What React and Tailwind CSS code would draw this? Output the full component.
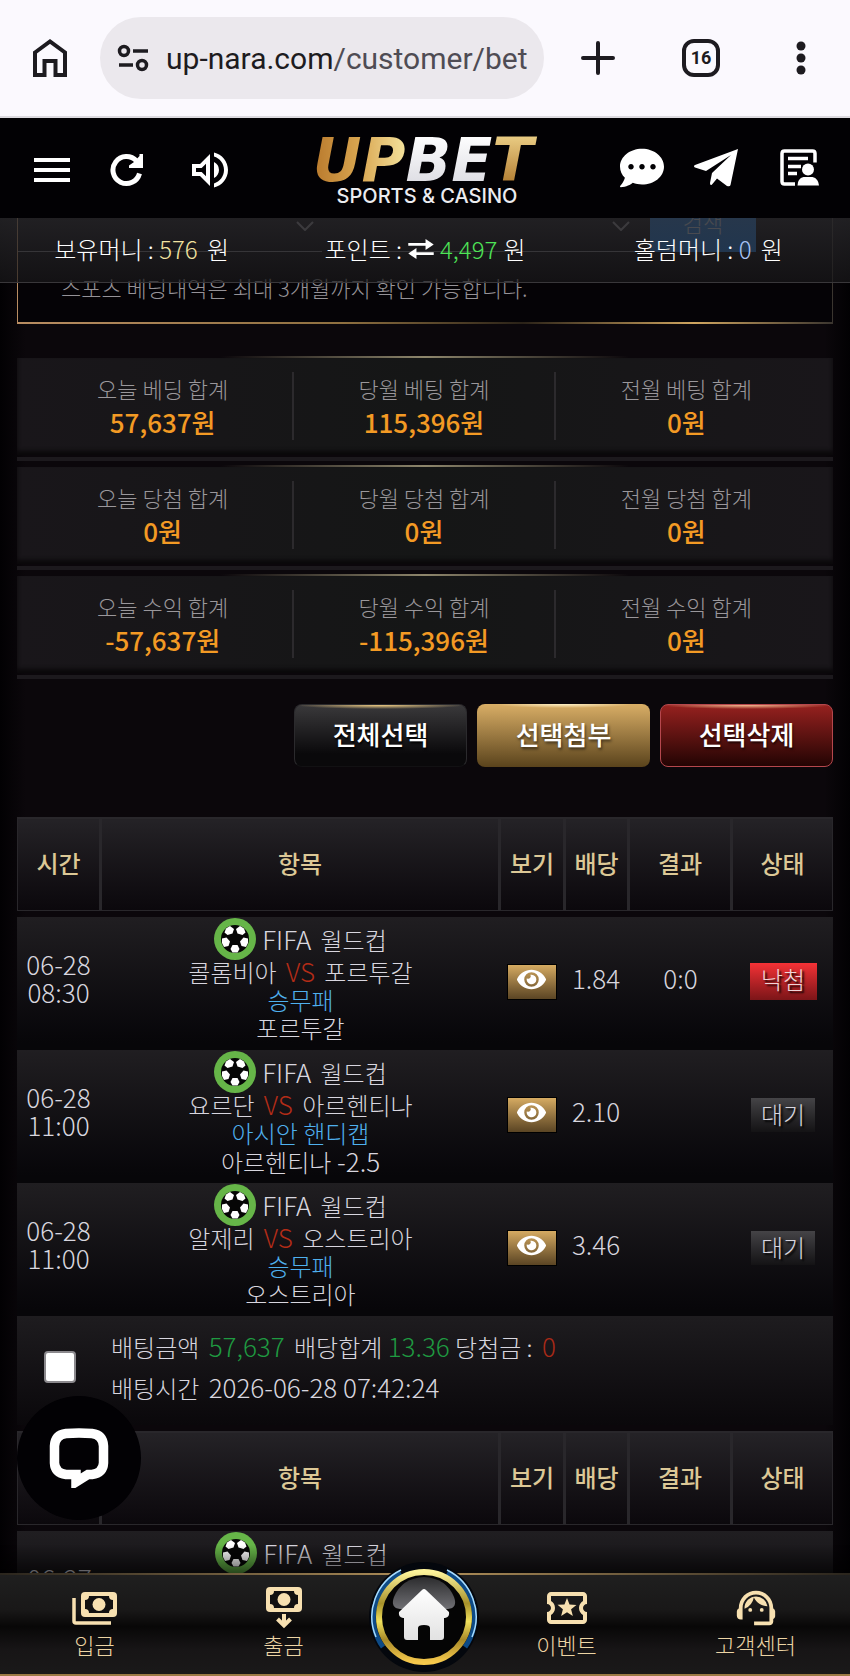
import React, { useState } from 'react'
import { MdMenu, MdOutlineVolumeUp, MdOutlineLocalActivity, MdSupportAgent } from 'react-icons/md'
import { FaCommentDots, FaEye } from 'react-icons/fa'

const SUMMARY = [
  [['오늘 베딩 합계', '57,637원'], ['당월 베팅 합계', '115,396원'], ['전월 베팅 합계', '0원']],
  [['오늘 당첨 합계', '0원'], ['당월 당첨 합계', '0원'], ['전월 당첨 합계', '0원']],
  [['오늘 수익 합계', '-57,637원'], ['당월 수익 합계', '-115,396원'], ['전월 수익 합계', '0원']],
]

const GAMES = [
  { date: '06-28', time: '08:30', home: '콜롬비아', away: '포르투갈', market: '승무패', pick: '포르투갈', odds: '1.84', score: '0:0', lost: true },
  { date: '06-28', time: '11:00', home: '요르단', away: '아르헨티나', market: '아시안 핸디캡', pick: '아르헨티나', line: '-2.5', odds: '2.10', score: '', lost: false },
  { date: '06-28', time: '11:00', home: '알제리', away: '오스트리아', market: '승무패', pick: '오스트리아', odds: '3.46', score: '', lost: false },
]

function BrowserBar() {
  return (
    <div className="flex h-[118px] items-center border-b-2 border-[#dddbe0] bg-[#fbf9fe] pr-10 pl-8 text-[#1d1b20]">
      <button aria-label="홈" className="mr-8">
        <svg width="36" height="40" viewBox="0 0 36 40" fill="none" stroke="currentColor" strokeWidth="4">
          <path d="M3 14.500 18 3.500l15 11V37h-9.500V23h-11v14H3z" />
        </svg>
      </button>
      <button className="flex h-[82px] flex-1 items-center rounded-full bg-[#ebe8ed] pl-4 text-left text-[30px] whitespace-nowrap font-['Roboto',sans-serif]">
        <svg width="34" height="30" viewBox="0 0 34 30" fill="none" stroke="currentColor" strokeWidth="3.500" className="mr-4 shrink-0">
          <circle cx="8" cy="8" r="4.500" />
          <path d="M17 8h15M3 22h14" />
          <circle cx="26" cy="22" r="4.500" />
        </svg>
        <span>up-nara.com<span className="text-[#4f4c54]">/customer/bet</span></span>
      </button>
      <div className="ml-9 flex items-center">
        <button aria-label="새 탭">
          <svg width="36" height="36" viewBox="0 0 36 36" stroke="currentColor" strokeWidth="4" strokeLinecap="round">
            <path d="M18 3v30M3 18h30" />
          </svg>
        </button>
        <button className="ml-[66px] flex size-[38px] items-center justify-center rounded-xl border-4 border-[#1d1b20] text-lg font-bold font-['Roboto',sans-serif]">
          16
        </button>
        <button aria-label="메뉴" className="ml-[72px]">
          <svg width="18" height="36" viewBox="0 0 18 36" fill="currentColor">
            <circle cx="9" cy="6" r="4.500" />
            <circle cx="9" cy="18" r="4.500" />
            <circle cx="9" cy="30" r="4.500" />
          </svg>
        </button>
      </div>
    </div>
  )
}

function Logo() {
  return (
    <a href="#" className="flex flex-col items-center pt-1">
      <span className="flex text-[60px] leading-[52px] font-bold italic font-['DejaVu_Sans',sans-serif]">
        <span className="bg-linear-to-r from-[#b8792c] via-[#d9a650] to-[#f3e29c] bg-clip-text text-transparent">UP</span>
        <span className="bg-linear-to-b from-white to-[#dcdce2] bg-clip-text text-transparent">BE</span>
        <span className="bg-linear-to-b from-[#ecd087] to-[#b07a2c] bg-clip-text pr-2 text-transparent">T</span>
      </span>
      <span className="text-xl leading-5 font-medium text-[#ececf0] font-['Inter',sans-serif]">SPORTS &amp; CASINO</span>
    </a>
  )
}

function SiteHeader() {
  return (
    <div className="flex h-[100px] items-center justify-between bg-[#020104] pr-[30px] pl-7 text-white">
      <div className="flex items-center pt-1">
        <button aria-label="메뉴 열기"><MdMenu size={48} /></button>
        <button aria-label="새로고침" className="ml-[34px]">
          <svg width="34" height="34" viewBox="0 0 34 34">
            <path d="M29.500 20.500A13.500 13.500 0 1 1 26.500 8" fill="none" stroke="currentColor" strokeWidth="5" />
            <path d="M33 1v14H19v-2.500l5-3.500L29.500 3V1z" fill="currentColor" />
          </svg>
        </button>
        <button aria-label="소리" className="ml-[42px]"><MdOutlineVolumeUp size={48} /></button>
      </div>
      <Logo />
      <div className="flex items-center">
        <a href="#" aria-label="채팅"><FaCommentDots size={44} /></a>
        <a href="#" aria-label="텔레그램" className="ml-[30px]">
          <svg width="44" height="38" viewBox="0 0 44 38" fill="currentColor">
            <path d="M44 0 1 16q-2 1 0 2.500L12 22 37 6 18 24l-2 10q0 3 2 1.500l5-6L33 37q3 1 3.500-1z" />
          </svg>
        </a>
        <a href="#" aria-label="내 정보" className="ml-[42px]">
          <svg width="40" height="38" viewBox="0 0 40 38" fill="none" stroke="currentColor" strokeWidth="3.500">
            <path d="M15 35H4.500Q2 35 2 32.500v-28Q2 2 4.500 2h28Q35 2 35 4.500v9" />
            <path d="M8 9.500h20M8 17.500h13M8 24.500h9" />
            <circle cx="28" cy="20.500" r="6" fill="currentColor" stroke="none" />
            <path d="M17.500 36.500q0-7 6-8.500h9q6 1.500 6.500 8.500z" fill="currentColor" stroke="none" />
          </svg>
        </a>
      </div>
    </div>
  )
}

function MoneyBar() {
  return (
    <div className="absolute inset-x-0 top-full grid h-[65px] grid-cols-3 items-center border-b border-[#39373a] bg-linear-to-b from-[#28272a]/80 to-[#19181a]/70 pb-0.5 text-center text-2xl font-light text-white">
      <p>보유머니 : <span className="mr-1 text-[#f3e3a0]">576</span> 원</p>
      <p className="flex items-center justify-center gap-1.5">
        포인트 :
        <svg width="26" height="20" viewBox="0 0 28 22" fill="currentColor">
          <path d="M0 4.500h19V0l9 6-9 6V7.500H0zM28 14.500H9V10l-9 6 9 6v-4.500h19z" />
        </svg>
        <span className="text-[#4ee457]">4,497</span> 원
      </p>
      <p>홀덤머니 : <span className="mr-1 text-[#a9c4f5]">0</span> 원</p>
    </div>
  )
}

function FilterSelect({ label }) {
  return (
    <label className="relative block w-[304px] border-b border-[#77747a]">
      <select aria-label={label} className="h-14 w-full appearance-none bg-transparent">
        <option></option>
      </select>
      <svg width="18" height="10" viewBox="0 0 18 10" fill="none" stroke="#8a878c" strokeWidth="2" className="absolute right-2 bottom-5">
        <path d="m1 1 8 8 8-8" />
      </svg>
    </label>
  )
}

function FilterBox() {
  return (
    <section className="bg-[linear-gradient(90deg,#b98d62,#8f7040_40%,#2a2218_62%,#d0a560_83%,#3a352f)] px-px pb-0.5">
      <div className="bg-[#050306]">
        <div className="flex h-[34px] items-end gap-3 overflow-hidden">
          <FilterSelect label="시작일" />
          <FilterSelect label="종료일" />
          <button className="h-14 w-[106px] shrink-0 bg-[#2277d0] pb-1 text-[22px] font-light text-[#c5d0de]">검색</button>
        </div>
        <p className="px-[43px] pt-[19px] pb-[18px] text-[22px] leading-[33px] font-light text-[#959297]">
          스포츠 베딩내역은 최대 3개월까지 확인 가능합니다.
        </p>
      </div>
    </section>
  )
}

function SummaryRow({ cells }) {
  return (
    <div className="pb-1">
      <div className="h-0.5 bg-linear-to-r from-transparent from-25% via-[#8e866c] to-transparent to-75%" />
      <dl className="mb-0.5 grid h-[97px] grid-cols-3 items-center bg-[linear-gradient(90deg,#19161a,#151616_50%,#19161a)] px-4 pb-0.5 text-center shadow-[inset_0_-4px_4px_#0a080a]">
        {cells.map(([label, value], i) => (
          <div key={label} className={i < 2 ? 'border-r-2 border-[#2c2a2d]' : ''}>
            <dt className="text-[22px] leading-8 font-light text-[#9a979b]">{label}</dt>
            <dd className="text-[26px] leading-9 font-medium text-[#f39a24]">{value}</dd>
          </div>
        ))}
      </dl>
      <div className="h-1 bg-[#1c191d]" />
    </div>
  )
}

function SoccerBall() {
  return (
    <svg width="42" height="42" viewBox="0 0 42 42" className="shrink-0">
      <circle cx="21" cy="21" r="21" fill="#66b548" />
      <circle cx="21" cy="21" r="14" fill="#060606" />
      <g fill="#fff">
        <path d="m12 10.500 4-2.500 4 3-1.500 4.500-5 1.500-3-2.500z" />
        <path d="m30 10.500-4-2.500-4 3 1.500 4.500 5 1.500 3-2.500z" />
        <path d="m8 20.500 4.500-1 3.500 4-1.500 4.500-4.500 1-2-4z" />
        <path d="m34 20.500-4.500-1-3.500 4 1.500 4.500 4.500 1 2-4z" />
        <path d="m18.500 27h5l2 4-2 3.500h-5L16.500 31z" />
      </g>
    </svg>
  )
}

function League() {
  return (
    <div className="flex h-10 items-center justify-center gap-1.5 pt-1">
      <SoccerBall />
      <span><span className="mr-1 text-[26px]">FIFA</span> 월드컵</span>
    </div>
  )
}

function HeadCells() {
  return (
    <thead>
      <tr className="h-[94px] bg-linear-to-b from-[#252327] to-[#0b080c] text-2xl text-[#dcc896]">
        {['시간', '항목', '보기', '배당', '결과', '상태'].map((name) => (
          <th key={name} className="border-y border-r-3 border-t-2 border-[#29272b] pb-1 font-medium first:border-l last:border-r">
            {name}
          </th>
        ))}
      </tr>
    </thead>
  )
}

function BetTable({ children }) {
  return (
    <table className="w-full table-fixed border-separate border-spacing-0 text-center text-2xl leading-7 font-light text-[#d8d6df]">
      <colgroup>
        <col className="w-[85px]" />
        <col />
        <col className="w-[65px]" />
        <col className="w-[64px]" />
        <col className="w-[103px]" />
        <col className="w-[100px]" />
      </colgroup>
      <HeadCells />
      <tbody className="before:block before:h-1.5">{children}</tbody>
    </table>
  )
}

const rowClass = 'h-[133px] bg-linear-to-b from-[#201e21] to-[#070609] to-95%'

function GameRow({ game }) {
  return (
    <tr className={rowClass}>
      <td className="pr-0.5 pb-3 text-[26px]">
        {game.date}
        <br />
        {game.time}
      </td>
      <td className="pr-0.5 align-top">
        <League />
        <p>{game.home} <span className="mx-1 text-[26px] text-[#b32c17]">VS</span> {game.away}</p>
        <p className="text-[#4fb0ee]">{game.market}</p>
        <p>
          {game.pick}
          {game.line && <span className="text-[26px]"> {game.line}</span>}
        </p>
      </td>
      <td className="pr-1 pb-1">
        <button aria-label="보기" className="inline-flex h-9 w-[50px] items-start justify-center border border-black bg-linear-to-b from-[#d6ab62] to-[#5b4524] align-middle text-white">
          <FaEye size={29} />
        </button>
      </td>
      <td className="pr-1 pb-3 text-[26px]">{game.odds}</td>
      <td className="pr-0.5 pb-3 text-[26px]">{game.score}</td>
      <td className="pb-1">
        {game.lost ? (
          <span className="inline-block h-[37px] w-[67px] bg-linear-to-b from-[#f53236] to-[#7c1518] leading-8 text-[#f0d5d8] text-shadow-[2px_2px_2px_#000]">낙첨</span>
        ) : (
          <span className="inline-block h-[34px] w-16 bg-linear-to-b from-[#454447] to-[#141315] leading-8 text-shadow-[2px_2px_2px_#000]">대기</span>
        )}
      </td>
    </tr>
  )
}

function NavItem({ label, children }) {
  return (
    <a href="#" className="flex flex-1 flex-col items-center pt-[11px]">
      <span className="flex h-11 items-center">{children}</span>
      <span className="text-[22px] leading-7 font-light text-[#ecd4a4]">{label}</span>
    </a>
  )
}

function Banknote() {
  return (
    <>
      <rect width="36" height="25" rx="4" fill="currentColor" />
      <path d="M8 4h20q0 4 4 4v9q-4 0-4 4H8q0-4-4-4V8q4 0 4-4z" fill="#121111" />
      <circle cx="18" cy="12.500" r="6.500" fill="currentColor" />
    </>
  )
}

function HomeButton() {
  return (
    <a href="#" aria-label="홈" className="relative w-[94px]">
      <svg width="112" height="112" viewBox="0 0 112 112" className="absolute -top-[14px] -left-[10px]">
        <defs>
          <linearGradient id="gold" x1="0" y1="0" x2="0" y2="1">
            <stop offset="0" stopColor="#fdf39a" />
            <stop offset="0.35" stopColor="#a8922a" />
            <stop offset="0.55" stopColor="#f0e05c" />
            <stop offset="0.75" stopColor="#a88a28" />
            <stop offset="1" stopColor="#f5c84c" />
          </linearGradient>
          <linearGradient id="shine" x1="0" y1="0" x2="0" y2="1">
            <stop offset="0" stopColor="#2c2c2e" />
            <stop offset="1" stopColor="#707074" />
          </linearGradient>
          <linearGradient id="roof" x1="0" y1="0" x2="0" y2="1">
            <stop offset="0" stopColor="#ffffff" />
            <stop offset="1" stopColor="#e2e2e2" />
          </linearGradient>
        </defs>
        <circle cx="56" cy="56" r="55" fill="#04070d" />
        <path d="M15 86A50 50 0 0 1 33 12M79 12a50 50 0 0 1 18 74" fill="none" stroke="#0d4a86" strokeWidth="5" />
        <path d="M8 76A52 52 0 0 1 33 9M79 9a52 52 0 0 1 25 67" fill="none" stroke="#a6dcff" strokeWidth="1.500" />
        <circle cx="56" cy="56" r="45" fill="#050505" stroke="url(#gold)" strokeWidth="6" />
        <path d="M26 36Q34 17 56 16q22 1 30 20 4 11-6 12H32q-10-1-6-12z" fill="url(#shine)" />
        <path d="M54 29q2-2 4 0l23 22q1 5-4 6h-1v19q0 3-3 3H62V67q0-3-6-3t-6 3v12H39q-3 0-3-3V57h-1q-5-1-4-6z" fill="url(#roof)" />
      </svg>
    </a>
  )
}

function BottomNav() {
  return (
    <nav className="fixed inset-x-0 bottom-0 z-20">
      <div className="h-7 bg-linear-to-b from-transparent to-black/60" />
      <div className="h-0.5 bg-linear-to-r from-[#2a251d] via-[#b3925a] to-[#2a251d]" />
      <div className="flex h-[101px] border-b-2 border-[#9b7a45] bg-[linear-gradient(180deg,#1f1f1f,#191818_35%,#080707_52%,#171516_75%,#1a1919)] text-[#f7e0b0]">
        <NavItem label="입금">
          <svg width="46" height="34" viewBox="0 0 46 34">
            <g transform="translate(9 1)"><Banknote /></g>
            <path d="M2 7v23q0 2 2 2h35" fill="none" stroke="currentColor" strokeWidth="3.500" />
          </svg>
        </NavItem>
        <NavItem label="출금">
          <svg width="36" height="42" viewBox="0 0 36 42">
            <Banknote />
            <path d="M18 27v11m-6.500-6 6.500 6.500 6.500-6.500" fill="none" stroke="currentColor" strokeWidth="4" />
          </svg>
        </NavItem>
        <HomeButton />
        <NavItem label="이벤트"><MdOutlineLocalActivity size={48} /></NavItem>
        <NavItem label="고객센터"><MdSupportAgent size={46} /></NavItem>
      </div>
    </nav>
  )
}

export default function App() {
  const [checked, setChecked] = useState(false)

  return (
    <div className="min-h-screen bg-[linear-gradient(90deg,#020103,#0b070b_3%,#0b070b_97%,#020103)] font-['Noto_Sans_CJK_KR',sans-serif]">
      <header className="sticky top-0 z-20">
        <BrowserBar />
        <SiteHeader />
        <MoneyBar />
      </header>

      <main className="px-[17px]">
        <FilterBox />

        <div className="mt-8">
          {SUMMARY.map((cells, i) => <SummaryRow key={i} cells={cells} />)}
        </div>

        <div className="mt-[21px] flex justify-end gap-[10px] text-[26px] font-medium text-white">
          <button className="h-[63px] w-[173px] rounded-lg border border-[#2b2a2d] border-b-[#121113] bg-[radial-gradient(ellipse_50%_4px_at_50%_0,#f3cf85,transparent),linear-gradient(180deg,#3a393b,#0a090b_80%)] pb-1 text-shadow-[1px_2px_2px_#000]">전체선택</button>
          <button className="h-[63px] w-[173px] rounded-lg bg-[radial-gradient(ellipse_40%_4px_at_50%_0,#fff1c8,transparent),linear-gradient(180deg,#d9ae66,#5a431c)] pb-1 text-shadow-[1px_2px_3px_#0009]">선택첨부</button>
          <button className="h-[63px] w-[173px] rounded-lg border border-[#b5474d] bg-[radial-gradient(ellipse_50%_4px_at_50%_0,#f5bd92,transparent),linear-gradient(180deg,#96211f,#230403)] pb-1 text-shadow-[1px_2px_2px_#0009]">선택삭제</button>
        </div>

        <div className="mt-[50px]">
          <BetTable>
            {GAMES.map((game) => <GameRow key={game.home} game={game} />)}
            <tr className="h-[109px] bg-linear-to-b from-[#1e1c1f] to-[#0a080b]">
              <td className="pb-2">
                <input
                  type="checkbox"
                  aria-label="베팅 선택"
                  checked={checked}
                  onChange={(e) => setChecked(e.target.checked)}
                  className="size-8 appearance-none rounded-sm border-2 border-[#8b898d] bg-white align-middle checked:bg-blue-500"
                />
              </td>
              <td colSpan={5} className="pb-2 pl-[9px] text-left leading-10">
                <p>
                  배팅금액 <span className="mx-1 text-[26px] text-[#1f9a41]">57,637</span> 배당합계{' '}
                  <span className="text-[26px] text-[#1f9a41]">13.36</span> 당첨금 :{' '}
                  <span className="ml-1 text-[26px] text-[#a92a17]">0</span>
                </p>
                <p>배팅시간 <span className="ml-1 text-[26px]">2026-06-28 07:42:24</span></p>
              </td>
            </tr>
          </BetTable>
        </div>

        <div className="mt-1.5">
          <BetTable>
            <tr className={rowClass}>
              <td className="pb-3 text-[26px]">06-27<br />&nbsp;</td>
              <td className="align-top"><League /></td>
              <td colSpan={4}></td>
            </tr>
          </BetTable>
        </div>
      </main>

      <button aria-label="실시간 상담" className="fixed bottom-[156px] left-[17px] z-10 flex size-[124px] items-center justify-center rounded-full bg-[#020104] text-white">
        <svg width="60" height="60" viewBox="0 0 60 60" fill="none" stroke="currentColor" strokeWidth="9.500">
          <path d="M27 46.500H17Q6 45 5.500 35V18Q6 7 17 5.500q13-1 26 0Q54 7 54.500 18v17Q54 45 43 46.500h-4L27 54z" />
        </svg>
      </button>
      <BottomNav />
    </div>
  )
}
